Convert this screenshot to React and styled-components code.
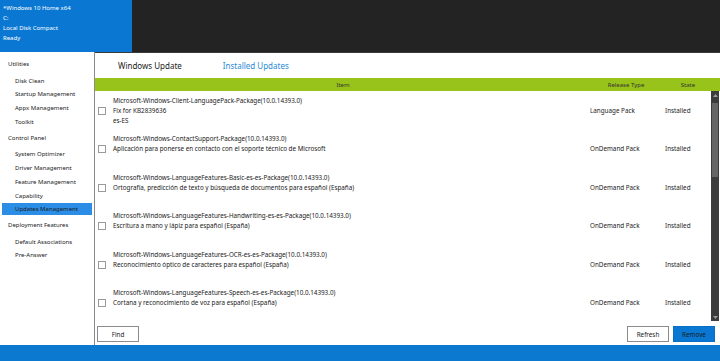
import styled, { createGlobalStyle } from 'styled-components'

const GlobalStyle = createGlobalStyle`
html, body {
  margin: 0;
  padding: 0;
  background: #fff;
}
body {
  font-family: 'Segoe UI', 'Noto Sans', 'Open Sans', sans-serif;
  color: #1a1a1a;
}
`

const ITEMS = [
  {
    name: 'Microsoft-Windows-Client-LanguagePack-Package(10.0.14393.0)',
    desc: 'Fix for KB2839636',
    extra: 'es-ES',
    type: 'Language Pack',
  },
  {
    name: 'Microsoft-Windows-ContactSupport-Package(10.0.14393.0)',
    desc: 'Aplicación para ponerse en contacto con el soporte técnico de Microsoft',
    type: 'OnDemand Pack',
  },
  {
    name: 'Microsoft-Windows-LanguageFeatures-Basic-es-es-Package(10.0.14393.0)',
    desc: 'Ortografía, predicción de texto y búsqueda de documentos para español (España)',
    type: 'OnDemand Pack',
  },
  {
    name: 'Microsoft-Windows-LanguageFeatures-Handwriting-es-es-Package(10.0.14393.0)',
    desc: 'Escritura a mano y lápiz para español (España)',
    type: 'OnDemand Pack',
  },
  {
    name: 'Microsoft-Windows-LanguageFeatures-OCR-es-es-Package(10.0.14393.0)',
    desc: 'Reconocimiento óptico de caracteres para español (España)',
    type: 'OnDemand Pack',
  },
  {
    name: 'Microsoft-Windows-LanguageFeatures-Speech-es-es-Package(10.0.14393.0)',
    desc: 'Cortana y reconocimiento de voz para español (España)',
    type: 'OnDemand Pack',
  },
]

const MENU = [
  { title: 'Utilities', items: ['Disk Clean', 'Startup Management', 'Appx Management', 'Toolkit'] },
  { title: 'Control Panel', items: ['System Optimizer', 'Driver Management', 'Feature Management', 'Capability', 'Updates Management'] },
  { title: 'Deployment Features', items: ['Default Associations', 'Pre-Answer'] },
]

const Window = styled.div`
width: 720px;
height: 361px;
display: flex;
flex-direction: column;
overflow: hidden;
`

const TopBar = styled.div`
height: 52px;
display: flex;
background: #232323;
`

const StatusPanel = styled.div`
width: 129px;
background: #0a78d2;
color: #fff;
font-size: 6px;
line-height: 10px;
padding: 3px 0 0 3px;
`

const Main = styled.div`
flex: 1;
display: flex;
min-height: 0;
`

const Sidebar = styled.div`
width: 94px;
border-right: 1px solid #8a8a8a;
background: #fff;
padding-top: 5px;
font-size: 6px;
`

const SideGroup = styled.div`
display: flex;
flex-direction: column;
margin-bottom: 1px;
`

const SideTitle = styled.div`
height: 14px;
line-height: 14px;
padding-left: 8px;
margin-bottom: 3.5px;
`

const SideItem = styled.div`
height: 12px;
line-height: 12px;
margin: 0 2px 1.8px 2px;
padding-left: 13px;
background: ${p => (p.$active ? '#2b8de6' : 'transparent')};
`

const Content = styled.div`
flex: 1;
display: flex;
flex-direction: column;
border-top: 1px solid #3a3a3a;
background: #fff;
min-width: 0;
`

const Tabs = styled.div`
height: 25px;
display: flex;
align-items: center;
gap: 41px;
padding-left: 23px;
font-size: 8px;
`

const Tab = styled.div`
color: ${p => (p.$active ? '#2a8ad8' : '#222')};
`

const HeaderRow = styled.div`
height: 13px;
background: #98c31b;
display: grid;
grid-template-columns: 496px 70px 54px 1fr;
align-items: center;
font-size: 6px;
color: #333;
text-align: center;
`

const Body = styled.div`
height: 230px;
display: flex;
`

const List = styled.div`
flex: 1;
padding-top: 4px;
overflow: hidden;
`

const Row = styled.div`
height: 38.5px;
display: grid;
grid-template-columns: 18px 477px 75px 1fr;
grid-template-rows: 10px 10px 10px;
align-content: start;
align-items: center;
font-size: 6.3px;
white-space: nowrap;
`

const Cell = styled.div`
grid-column: ${p => p.$col};
grid-row: ${p => p.$row};
`

const CheckBox = styled.div`
grid-column: 1;
grid-row: 2;
width: 6px;
height: 6px;
margin: 1px 0 0 3px;
border: 1px solid #9a9a9a;
background: #fff;
`

const ScrollBar = styled.div`
width: 8px;
margin-right: 1px;
background: #3c3c3c;
display: flex;
flex-direction: column;
align-items: center;
`

const ScrollArrow = styled.div`
height: 8px;
display: flex;
align-items: center;
justify-content: center;
`

const ScrollThumb = styled.div`
width: 6px;
height: 74px;
margin-top: 4px;
background: #666;
`

const Footer = styled.div`
flex: 1;
display: flex;
align-items: center;
padding: 2px 5px 0 2px;
`

const Spacer = styled.div`
flex: 1;
`

const Button = styled.div`
width: 40px;
height: 14px;
display: flex;
align-items: center;
justify-content: center;
font-size: 6.3px;
border: 1px solid ${p => (p.$primary ? '#0a6fc2' : '#8c8c8c')};
background: ${p => (p.$primary ? '#0a78d2' : '#fff')};
margin-left: ${p => p.$gap || 0}px;
`

const BottomBar = styled.div`
height: 16px;
background: #0b79d0;
`

function Arrow({ up }) {
  return (
    <svg width="5" height="3" viewBox="0 0 5 3">
      <path d={up ? 'M0 3 L2.5 0 L5 3 Z' : 'M0 0 L2.5 3 L5 0 Z'} fill="#9a9a9a" />
    </svg>
  )
}

function App() {
  return (
    <Window>
      <GlobalStyle />
      <TopBar>
        <StatusPanel>
          <div>*Windows 10 Home x64</div>
          <div>C:</div>
          <div>Local Disk Compact</div>
          <div>Ready</div>
        </StatusPanel>
      </TopBar>
      <Main>
        <Sidebar>
          {MENU.map(group => (
            <SideGroup key={group.title}>
              <SideTitle>{group.title}</SideTitle>
              {group.items.map(item => (
                <SideItem key={item} $active={item === 'Updates Management'}>{item}</SideItem>
              ))}
            </SideGroup>
          ))}
        </Sidebar>
        <Content>
          <Tabs>
            <Tab>Windows Update</Tab>
            <Tab $active>Installed Updates</Tab>
          </Tabs>
          <HeaderRow>
            <div>Item</div>
            <div>Release Type</div>
            <div>State</div>
          </HeaderRow>
          <Body>
            <List>
              {ITEMS.map(item => (
                <Row key={item.name}>
                  <Cell $col={2} $row={1}>{item.name}</Cell>
                  <CheckBox />
                  <Cell $col={2} $row={2}>{item.desc}</Cell>
                  <Cell $col={3} $row={2}>{item.type}</Cell>
                  <Cell $col={4} $row={2}>Installed</Cell>
                  {item.extra && <Cell $col={2} $row={3}>{item.extra}</Cell>}
                </Row>
              ))}
            </List>
            <ScrollBar>
              <ScrollArrow><Arrow up /></ScrollArrow>
              <ScrollThumb />
              <Spacer />
              <ScrollArrow><Arrow /></ScrollArrow>
            </ScrollBar>
          </Body>
          <Footer>
            <Button>Find</Button>
            <Spacer />
            <Button>Refresh</Button>
            <Button $primary $gap={4}>Remove</Button>
          </Footer>
        </Content>
      </Main>
      <BottomBar />
    </Window>
  )
}

export default App
